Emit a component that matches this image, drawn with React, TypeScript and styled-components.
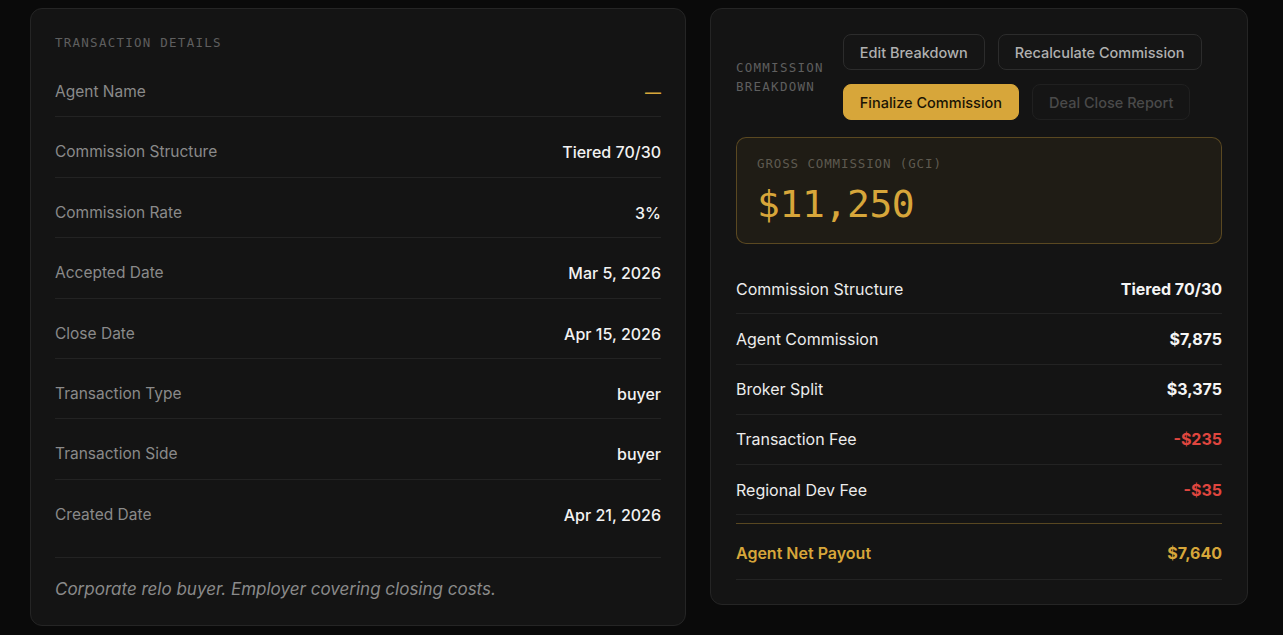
import React from 'react';
import styled, { createGlobalStyle } from 'styled-components';

const GlobalStyle = createGlobalStyle`
  html, body {
    margin: 0;
    background: #0a0a0a;
  }
  body {
    font-family: Inter, "Noto Sans", sans-serif;
    -webkit-font-smoothing: antialiased;
  }
  * {
    box-sizing: border-box;
  }
`;

const gold = '#d7a63a';
const mono = '"DejaVu Sans Mono", "Liberation Mono", monospace';

const details = [
  { label: 'Agent Name', value: '—', accent: true },
  { label: 'Commission Structure', value: 'Tiered 70/30' },
  { label: 'Commission Rate', value: '3%' },
  { label: 'Accepted Date', value: 'Mar 5, 2026' },
  { label: 'Close Date', value: 'Apr 15, 2026' },
  { label: 'Transaction Type', value: 'buyer' },
  { label: 'Transaction Side', value: 'buyer' },
  { label: 'Created Date', value: 'Apr 21, 2026' },
];

const breakdown: { label: string; value: string; tone?: 'neg' }[] = [
  { label: 'Commission Structure', value: 'Tiered 70/30' },
  { label: 'Agent Commission', value: '$7,875' },
  { label: 'Broker Split', value: '$3,375' },
  { label: 'Transaction Fee', value: '-$235', tone: 'neg' },
  { label: 'Regional Dev Fee', value: '-$35', tone: 'neg' },
];

export default function App() {
  return (
    <>
      <GlobalStyle />
      <Page>
        <Card $side="left">
          <SectionTitle>Transaction Details</SectionTitle>
          <DetailList>
            {details.map((d) => (
              <DetailRow key={d.label}>
                <DetailLabel>{d.label}</DetailLabel>
                <DetailValue $accent={d.accent}>{d.value}</DetailValue>
              </DetailRow>
            ))}
          </DetailList>
          <Notes>Corporate relo buyer. Employer covering closing costs.</Notes>
        </Card>

        <Card $side="right">
          <Header>
            <SectionTitle $wrap>Commission Breakdown</SectionTitle>
            <Actions>
              <ActionButton>Edit Breakdown</ActionButton>
              <ActionButton>Recalculate Commission</ActionButton>
              <ActionButton $variant="primary">Finalize Commission</ActionButton>
              <ActionButton $variant="disabled">Deal Close Report</ActionButton>
            </Actions>
          </Header>

          <GciBox>
            <GciLabel>Gross Commission (GCI)</GciLabel>
            <GciAmount>$11,250</GciAmount>
          </GciBox>

          <SplitList>
            {breakdown.map((b) => (
              <SplitRow key={b.label}>
                <SplitLabel>{b.label}</SplitLabel>
                <SplitValue $tone={b.tone}>{b.value}</SplitValue>
              </SplitRow>
            ))}
            <TotalRow>
              <SplitLabel $gold>Agent Net Payout</SplitLabel>
              <SplitValue $tone="gold">$7,640</SplitValue>
            </TotalRow>
          </SplitList>
        </Card>
      </Page>
    </>
  );
}

const Page = styled.div`
  display: grid;
  grid-template-columns: 656fr 538fr;
  gap: 24px;
  align-items: start;
  padding: 8px 35px 8px 30px;
`;

const Card = styled.section<{ $side: 'left' | 'right' }>`
  background: #141414;
  border: 1px solid #252525;
  border-radius: 12px;
  padding: ${(p) => (p.$side === 'left' ? '24px 24px 24px' : '24px 25px 24px')};
`;

const SectionTitle = styled.h2<{ $wrap?: boolean }>`
  margin: 0;
  font-family: ${mono};
  font-size: 12.5px;
  font-weight: 400;
  letter-spacing: 0.1em;
  line-height: 19px;
  text-transform: uppercase;
  color: #5f5f5f;
  width: ${(p) => (p.$wrap ? 'min-content' : 'auto')};
`;

const DetailList = styled.div`
  display: flex;
  flex-direction: column;
  margin-top: 5px;
`;

const DetailRow = styled.div`
  display: flex;
  justify-content: space-between;
  align-items: flex-start;
  height: 60.4px;
  padding-top: 23px;
  line-height: 24px;
  border-bottom: 1px solid #232323;

  &:last-child {
    border-bottom: none;
  }
`;

const DetailLabel = styled.span`
  font-size: 15.5px;
  color: #8a8a8a;
`;

const DetailValue = styled.span<{ $accent?: boolean }>`
  font-size: 16px;
  font-weight: 500;
  color: ${(p) => (p.$accent ? gold : '#f2f2f2')};
`;

const Notes = styled.p`
  margin: 17px 0 0;
  padding: 19px 0 0;
  border-top: 1px solid #232323;
  font-size: 17px;
  font-style: italic;
  color: #8a8a8a;
  line-height: 24px;
`;

const Header = styled.div`
  display: flex;
  align-items: center;
  gap: 19px;
  margin-top: 1px;
`;

const Actions = styled.div`
  flex: 1;
  display: flex;
  flex-wrap: wrap;
  gap: 14px 13px;
`;

const ActionButton = styled.button<{ $variant?: 'primary' | 'disabled' }>`
  height: 36px;
  padding: 0 16px;
  border-radius: 8px;
  font-family: inherit;
  font-size: 14.5px;
  font-weight: 500;
  border: 1px solid ${(p) => (p.$variant === 'primary' ? gold : p.$variant === 'disabled' ? '#202020' : '#2c2c2c')};
  background: ${(p) => (p.$variant === 'primary' ? gold : '#151515')};
  color: ${(p) => (p.$variant === 'primary' ? '#1a1405' : p.$variant === 'disabled' ? '#4a4a4a' : '#b0b0b0')};
  cursor: ${(p) => (p.$variant === 'disabled' ? 'default' : 'pointer')};
`;

const GciBox = styled.div`
  margin-top: 17px;
  padding: 18px 20px 15px;
  border: 1px solid rgba(215, 166, 58, 0.32);
  border-radius: 10px;
  background: #1f1c15;
`;

const GciLabel = styled.div`
  font-family: ${mono};
  font-size: 12.5px;
  letter-spacing: 0.07em;
  text-transform: uppercase;
  color: #5e5a50;
  line-height: 16px;
`;

const GciAmount = styled.div`
  margin-top: 8px;
  font-family: ${mono};
  font-size: 38px;
  letter-spacing: -0.4px;
  line-height: 48px;
  color: ${gold};
`;

const SplitList = styled.div`
  margin-top: 20px;
  display: flex;
  flex-direction: column;
`;

const SplitRow = styled.div`
  display: flex;
  justify-content: space-between;
  align-items: center;
  height: 50.25px;
  border-bottom: 1px solid #232323;
`;

const TotalRow = styled(SplitRow)`
  height: 57px;
  margin-top: 8px;
  border-top: 1px solid rgba(215, 166, 58, 0.35);
  padding-top: 3px;
`;

const SplitLabel = styled.span<{ $gold?: boolean }>`
  font-size: 16px;
  font-weight: ${(p) => (p.$gold ? 600 : 400)};
  color: ${(p) => (p.$gold ? gold : '#ececec')};
`;

const SplitValue = styled.span<{ $tone?: 'neg' | 'gold' }>`
  font-size: 16px;
  font-weight: 700;
  color: ${(p) => (p.$tone === 'neg' ? '#e0463f' : p.$tone === 'gold' ? gold : '#f5f5f5')};
`;
